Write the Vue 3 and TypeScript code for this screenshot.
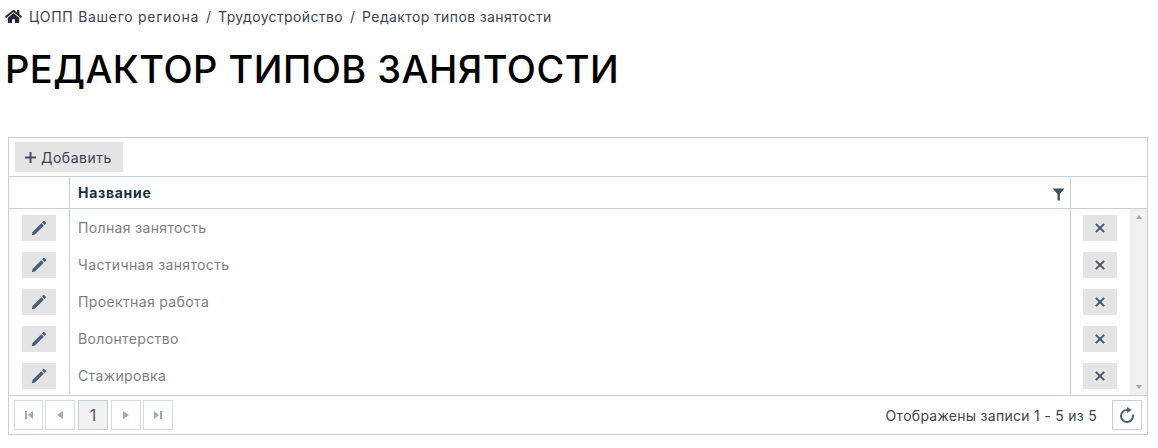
<script setup lang="ts">
const rows = ['Полная занятость', 'Частичная занятость', 'Проектная работа', 'Волонтерство', 'Стажировка']
const crumbs = ['ЦОПП Вашего региона', 'Трудоустройство', 'Редактор типов занятости']
</script>

<template>
  <div class="page">
    <nav class="crumbs">
      <svg class="home" viewBox="0 0 576 512" width="17" height="15">
        <path fill="#1f2933" d="M280 148 96 300v164a16 16 0 0 0 16 16l112-.3a16 16 0 0 0 16-16V368a16 16 0 0 1 16-16h64a16 16 0 0 1 16 16v95.6a16 16 0 0 0 16 16.1l112 .3a16 16 0 0 0 16-16V300L296 148a12 12 0 0 0-16 0zM572 251l-84-69V44a12 12 0 0 0-12-12h-56a12 12 0 0 0-12 12v72l-89-73a48 48 0 0 0-61 0L4 251a12 12 0 0 0-2 17l26 31a12 12 0 0 0 17 2L280 107a12 12 0 0 1 16 0l235 194a12 12 0 0 0 17-2l26-31a12 12 0 0 0-2-17z" />
      </svg>
      <template v-for="(c, i) in crumbs" :key="c">
        <span v-if="i > 0" class="sep">/</span>
        <span class="crumb" :class="{ lead: i === 0 }">{{ c }}</span>
      </template>
    </nav>

    <h1 class="title">РЕДАКТОР ТИПОВ ЗАНЯТОСТИ</h1>

    <div class="grid">
      <div class="toolbar">
        <button class="add-btn" type="button">
          <svg viewBox="0 0 11 11" width="11" height="11">
            <path stroke="#3d5368" stroke-width="2" fill="none" d="M5.500 0v11M0 5.500h11" />
          </svg>
          <span>Добавить</span>
        </button>
      </div>

      <div class="head">
        <div class="col-edit"></div>
        <div class="col-name head-name">
          <span>Название</span>
          <svg class="filter" viewBox="0 0 12 13" width="13" height="13">
            <path fill="#3d5368" d="M0 .5h12L7.400 6v6.500H5V6z" />
          </svg>
        </div>
        <div class="head-end"></div>
      </div>

      <div class="body">
        <div class="rows">
          <div v-for="r in rows" :key="r" class="row">
            <div class="col-edit">
              <button class="icon-btn" type="button">
                <svg viewBox="0 0 16 16" width="16" height="16">
                  <path fill="#48617a" d="M.8 15.200l.7-3.200 8.800-8.800 2.500 2.500-8.800 8.800zM11 2.300l1.200-1.200c.3-.3.7-.3 1 0l1.700 1.700c.3.3.3.7 0 1l-1.200 1.200z" />
                </svg>
              </button>
            </div>
            <div class="col-name cell-name">{{ r }}</div>
            <div class="col-del">
              <button class="icon-btn" type="button">
                <svg viewBox="0 0 12 12" width="10" height="10">
                  <path stroke="#3d5368" stroke-width="2.200" fill="none" d="M1 1l10 10M11 1 1 11" />
                </svg>
              </button>
            </div>
          </div>
        </div>
        <div class="scrollbar">
          <span class="arrow up"></span>
          <span class="arrow down"></span>
        </div>
      </div>

      <div class="footer">
        <div class="pager">
          <button class="page-btn first" type="button">
            <svg viewBox="0 0 8 8" width="8" height="8"><path fill="#a0a8b2" d="M0 0h2v8H0zM8 0v8L3 4z" /></svg>
          </button>
          <button class="page-btn" type="button">
            <svg viewBox="0 0 8 8" width="8" height="8"><path fill="#a0a8b2" d="M7 0v8L1 4z" /></svg>
          </button>
          <button class="page-btn current" type="button">1</button>
          <button class="page-btn" type="button">
            <svg viewBox="0 0 8 8" width="8" height="8"><path fill="#a0a8b2" d="M1 0v8l6-4z" /></svg>
          </button>
          <button class="page-btn" type="button">
            <svg viewBox="0 0 8 8" width="8" height="8"><path fill="#a0a8b2" d="M0 0v8l5-4zM6 0h2v8H6z" /></svg>
          </button>
        </div>
        <div class="info">Отображены записи 1 - 5 из 5</div>
        <button class="page-btn refresh" type="button">
          <svg viewBox="0 0 16 16" width="16" height="16">
            <path fill="none" stroke="#48617a" stroke-width="2" d="M8.500 3A6 6 0 1 0 13.800 7.500" />
            <path fill="#48617a" d="M8 0l4.800 3L8 6z" />
          </svg>
        </button>
      </div>
    </div>
  </div>
</template>

<style>
body {
  background: #fff;
}
</style>

<style scoped>
.page {
  width: 1158px;
  height: 448px;
  overflow: hidden;
  font-family: Inter, 'DejaVu Sans', sans-serif;
  color: #3a4350;
}

.crumbs {
  display: flex;
  align-items: center;
  height: 17px;
  padding: 8px 0 0 5px;
  font-size: 14px;
}

.home {
  margin-right: 7px;
}

.crumb {
  letter-spacing: 0.38px;
}

.crumb.lead {
  letter-spacing: 0.72px;
}

.sep {
  margin: 0 7px;
}

.title {
  margin: 22px 0 0 5px;
  font-size: 38px;
  line-height: 44px;
  font-weight: 550;
  color: #000;
  letter-spacing: 0.45px;
}

.grid {
  margin: 46px 0 0 8px;
  width: 1140px;
  height: 298px;
  box-sizing: border-box;
  border: 1px solid #c8ced8;
  display: flex;
  flex-direction: column;
}

.toolbar {
  height: 39px;
  box-sizing: border-box;
  padding: 4px 6px;
  border-bottom: 1px solid #c8ced8;
}

.add-btn {
  display: flex;
  align-items: center;
  gap: 5px;
  width: 108px;
  height: 30px;
  border: 0;
  padding: 0 0 0 10px;
  background: #e4e4e4;
  color: #3a4350;
  font: 14px Inter, 'DejaVu Sans', sans-serif;
  letter-spacing: 0.5px;
}

.head {
  display: flex;
  height: 32px;
  box-sizing: border-box;
  border-bottom: 1px solid #c8ced8;
}

.col-edit {
  width: 61px;
  box-sizing: border-box;
  border-right: 1px solid #c8ced8;
  display: flex;
  align-items: center;
  justify-content: center;
  padding-right: 1px;
}

.col-name {
  width: 1001px;
  box-sizing: border-box;
  border-right: 1px solid #c8ced8;
  padding: 0 5px 0 8px;
}

.head-name {
  display: flex;
  align-items: center;
  justify-content: space-between;
  font-size: 14px;
  font-weight: 700;
  letter-spacing: 0.7px;
  color: #1c2f40;
}

.filter {
  margin-top: 3px;
}

.body {
  display: flex;
  height: 187px;
  box-sizing: border-box;
  border-bottom: 1px solid #c8ced8;
}

.rows {
  width: 1121px;
}

.row {
  display: flex;
  height: 37px;
}

.cell-name {
  display: flex;
  align-items: center;
  font-size: 14px;
  letter-spacing: 0.36px;
  color: #7d7d7d;
}

.col-del {
  width: 59px;
  box-sizing: border-box;
  padding-right: 1px;
  display: flex;
  align-items: center;
  justify-content: center;
}

.icon-btn {
  display: flex;
  align-items: center;
  justify-content: center;
  width: 34px;
  height: 26px;
  padding: 0;
  border: 0;
  background: #e4e4e4;
}

.scrollbar {
  width: 17px;
  background: #f0f0f0;
  display: flex;
  flex-direction: column;
  justify-content: space-between;
  align-items: center;
  padding: 6px 0;
  box-sizing: border-box;
}

.arrow {
  width: 0;
  height: 0;
  border-left: 3.500px solid transparent;
  border-right: 3.500px solid transparent;
}

.arrow.up {
  border-bottom: 4px solid #a6a6a6;
}

.arrow.down {
  border-top: 4px solid #a6a6a6;
}

.footer {
  flex: 1;
  display: flex;
  align-items: center;
  padding: 0 5px;
}

.pager {
  display: flex;
  gap: 2px;
}

.page-btn {
  display: flex;
  align-items: center;
  justify-content: center;
  width: 30px;
  height: 30px;
  padding: 0;
  background: #fff;
  border: 1px solid #d5dae2;
  color: #4a5560;
  font: 16px Inter, 'DejaVu Sans', sans-serif;
}

.page-btn.first {
  width: 29px;
}

.page-btn.current {
  background: #f1f1f1;
  border-color: #c8ced8;
  margin: 0 1px;
}

.info {
  margin-left: auto;
  margin-right: 15px;
  font-size: 14px;
  letter-spacing: 0.28px;
}

.refresh {
  border-color: #c8ced8;
}
</style>
